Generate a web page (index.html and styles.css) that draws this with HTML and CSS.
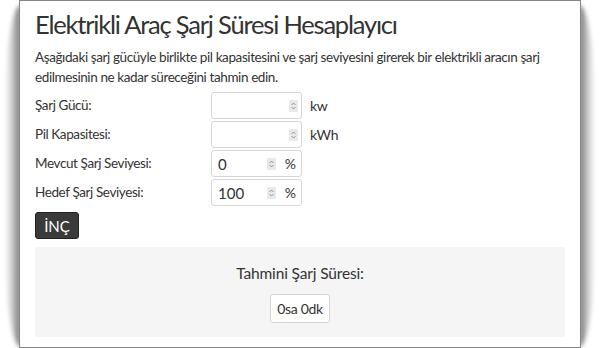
FILE: index.html
```html
<!DOCTYPE html>
<html lang="tr">
<head>
<meta charset="utf-8">
<title>Elektrikli Araç Şarj Süresi Hesaplayıcı</title>
<link rel="stylesheet" href="styles.css">
</head>
<body>
<div class="sheet">
  <h1 class="title">Elektrikli Araç Şarj Süresi Hesaplayıcı</h1>
  <p class="intro">Aşağıdaki şarj gücüyle birlikte pil kapasitesini ve şarj seviyesini girerek bir elektrikli aracın şarj edilmesinin ne kadar süreceğini tahmin edin.</p>
  <div class="form">
    <label class="label">Şarj Gücü:</label>
    <div class="field">
      <div class="box"><span class="val"></span><span class="spin"><svg width="9" height="12" viewBox="0 0 9 12"><rect x="0" y="0" width="9" height="12" rx="1.5" fill="#e9e9e9"/><path d="M2.5 5L4.5 3L6.5 5M2.5 7L4.5 9L6.5 7" fill="none" stroke="#8a8a8a" stroke-width="0.9"/></svg></span></div>
      <span class="unit">kw</span>
    </div>
    <label class="label">Pil Kapasitesi:</label>
    <div class="field">
      <div class="box"><span class="val"></span><span class="spin"><svg width="9" height="12" viewBox="0 0 9 12"><rect x="0" y="0" width="9" height="12" rx="1.5" fill="#e9e9e9"/><path d="M2.5 5L4.5 3L6.5 5M2.5 7L4.5 9L6.5 7" fill="none" stroke="#8a8a8a" stroke-width="0.9"/></svg></span></div>
      <span class="unit">kWh</span>
    </div>
    <label class="label">Mevcut Şarj Seviyesi:</label>
    <div class="field">
      <div class="box box-pct"><span class="val">0</span><span class="spin"><svg width="9" height="12" viewBox="0 0 9 12"><rect x="0" y="0" width="9" height="12" rx="1.5" fill="#e9e9e9"/><path d="M2.5 5L4.5 3L6.5 5M2.5 7L4.5 9L6.5 7" fill="none" stroke="#8a8a8a" stroke-width="0.9"/></svg></span><span class="pct">%</span></div>
    </div>
    <label class="label">Hedef Şarj Seviyesi:</label>
    <div class="field">
      <div class="box box-pct"><span class="val">100</span><span class="spin"><svg width="9" height="12" viewBox="0 0 9 12"><rect x="0" y="0" width="9" height="12" rx="1.5" fill="#e9e9e9"/><path d="M2.5 5L4.5 3L6.5 5M2.5 7L4.5 9L6.5 7" fill="none" stroke="#8a8a8a" stroke-width="0.9"/></svg></span><span class="pct">%</span></div>
    </div>
  </div>
  <button class="btn" type="button">İNÇ</button>
  <div class="result">
    <div class="result-title">Tahmini Şarj Süresi:</div>
    <div class="result-value">0sa 0dk</div>
  </div>
</div>
</body>
</html>
```
FILE: styles.css
```css
html, body {
  margin: 0;
  padding: 0;
}
html {
  background: #fff;
}
body {
  font-family: Lato, "Noto Sans", sans-serif;
  color: #333;
  overflow: hidden;
}
.sheet {
  position: relative;
  box-sizing: border-box;
  width: 562px;
  height: 348px;
  margin: 0 auto;
  background: #fff;
  border: 1px solid #858585;
  padding: 0 15px;
}
.sheet::before,
.sheet::after {
  content: "";
  position: absolute;
  top: 4px;
  bottom: 0;
  width: 16px;
  z-index: -1;
  filter: blur(2px);
}
.sheet::before {
  left: -15px;
  background: linear-gradient(to left, rgba(0,0,0,0.6), rgba(0,0,0,0.25) 45%, rgba(0,0,0,0));
  border-radius: 100% 0 0 100% / 30% 0 0 30%;
}
.sheet::after {
  right: -15px;
  background: linear-gradient(to right, rgba(0,0,0,0.6), rgba(0,0,0,0.25) 45%, rgba(0,0,0,0));
  border-radius: 0 100% 100% 0 / 0 30% 30% 0;
}
.title {
  margin: 7px 0 0;
  font-size: 25.5px;
  font-weight: 400;
  line-height: 32px;
  letter-spacing: -1.2px;
}
.intro {
  margin: 7px 0 0;
  font-size: 13.5px;
  line-height: 20px;
  letter-spacing: -0.4px;
}
.form {
  display: grid;
  grid-template-columns: 176px auto;
  row-gap: 2px;
  margin-top: 5px;
}
.label {
  font-size: 13.5px;
  line-height: 27px;
  letter-spacing: -0.4px;
}
.field {
  display: flex;
  align-items: center;
  gap: 8px;
}
.box {
  box-sizing: border-box;
  width: 91px;
  height: 27px;
  border: 1px solid #d6d6d6;
  border-radius: 3px;
  display: flex;
  align-items: center;
  padding: 0 3px 0 6px;
  font-size: 15px;
  background: #fff;
}
.val {
  flex: 1;
}
.spin {
  display: flex;
  width: 9px;
  height: 12px;
}
.box-pct .spin {
  margin-right: 9px;
}
.pct {
  font-size: 14px;
  margin-right: 2px;
}
.unit {
  font-size: 14px;
  letter-spacing: -0.3px;
}
.btn {
  display: block;
  margin-top: 6px;
  width: 44px;
  height: 27px;
  padding: 0;
  border: 1px solid #222;
  border-radius: 3px;
  background: #3a3a3a;
  color: #fff;
  font-family: Lato, "Noto Sans", sans-serif;
  font-size: 15px;
}
.result {
  margin-top: 8px;
  height: 90px;
  background: #f5f5f5;
  display: flex;
  flex-direction: column;
  align-items: center;
  padding-top: 15px;
  box-sizing: border-box;
}
.result-title {
  font-size: 15.5px;
  line-height: 22px;
  letter-spacing: -0.15px;
}
.result-value {
  margin-top: 10px;
  box-sizing: border-box;
  height: 29px;
  padding: 0 6px;
  border: 1px solid #d3d3d3;
  border-radius: 3px;
  background: #fff;
  font-size: 14px;
  letter-spacing: -0.3px;
  line-height: 27px;
}
```
